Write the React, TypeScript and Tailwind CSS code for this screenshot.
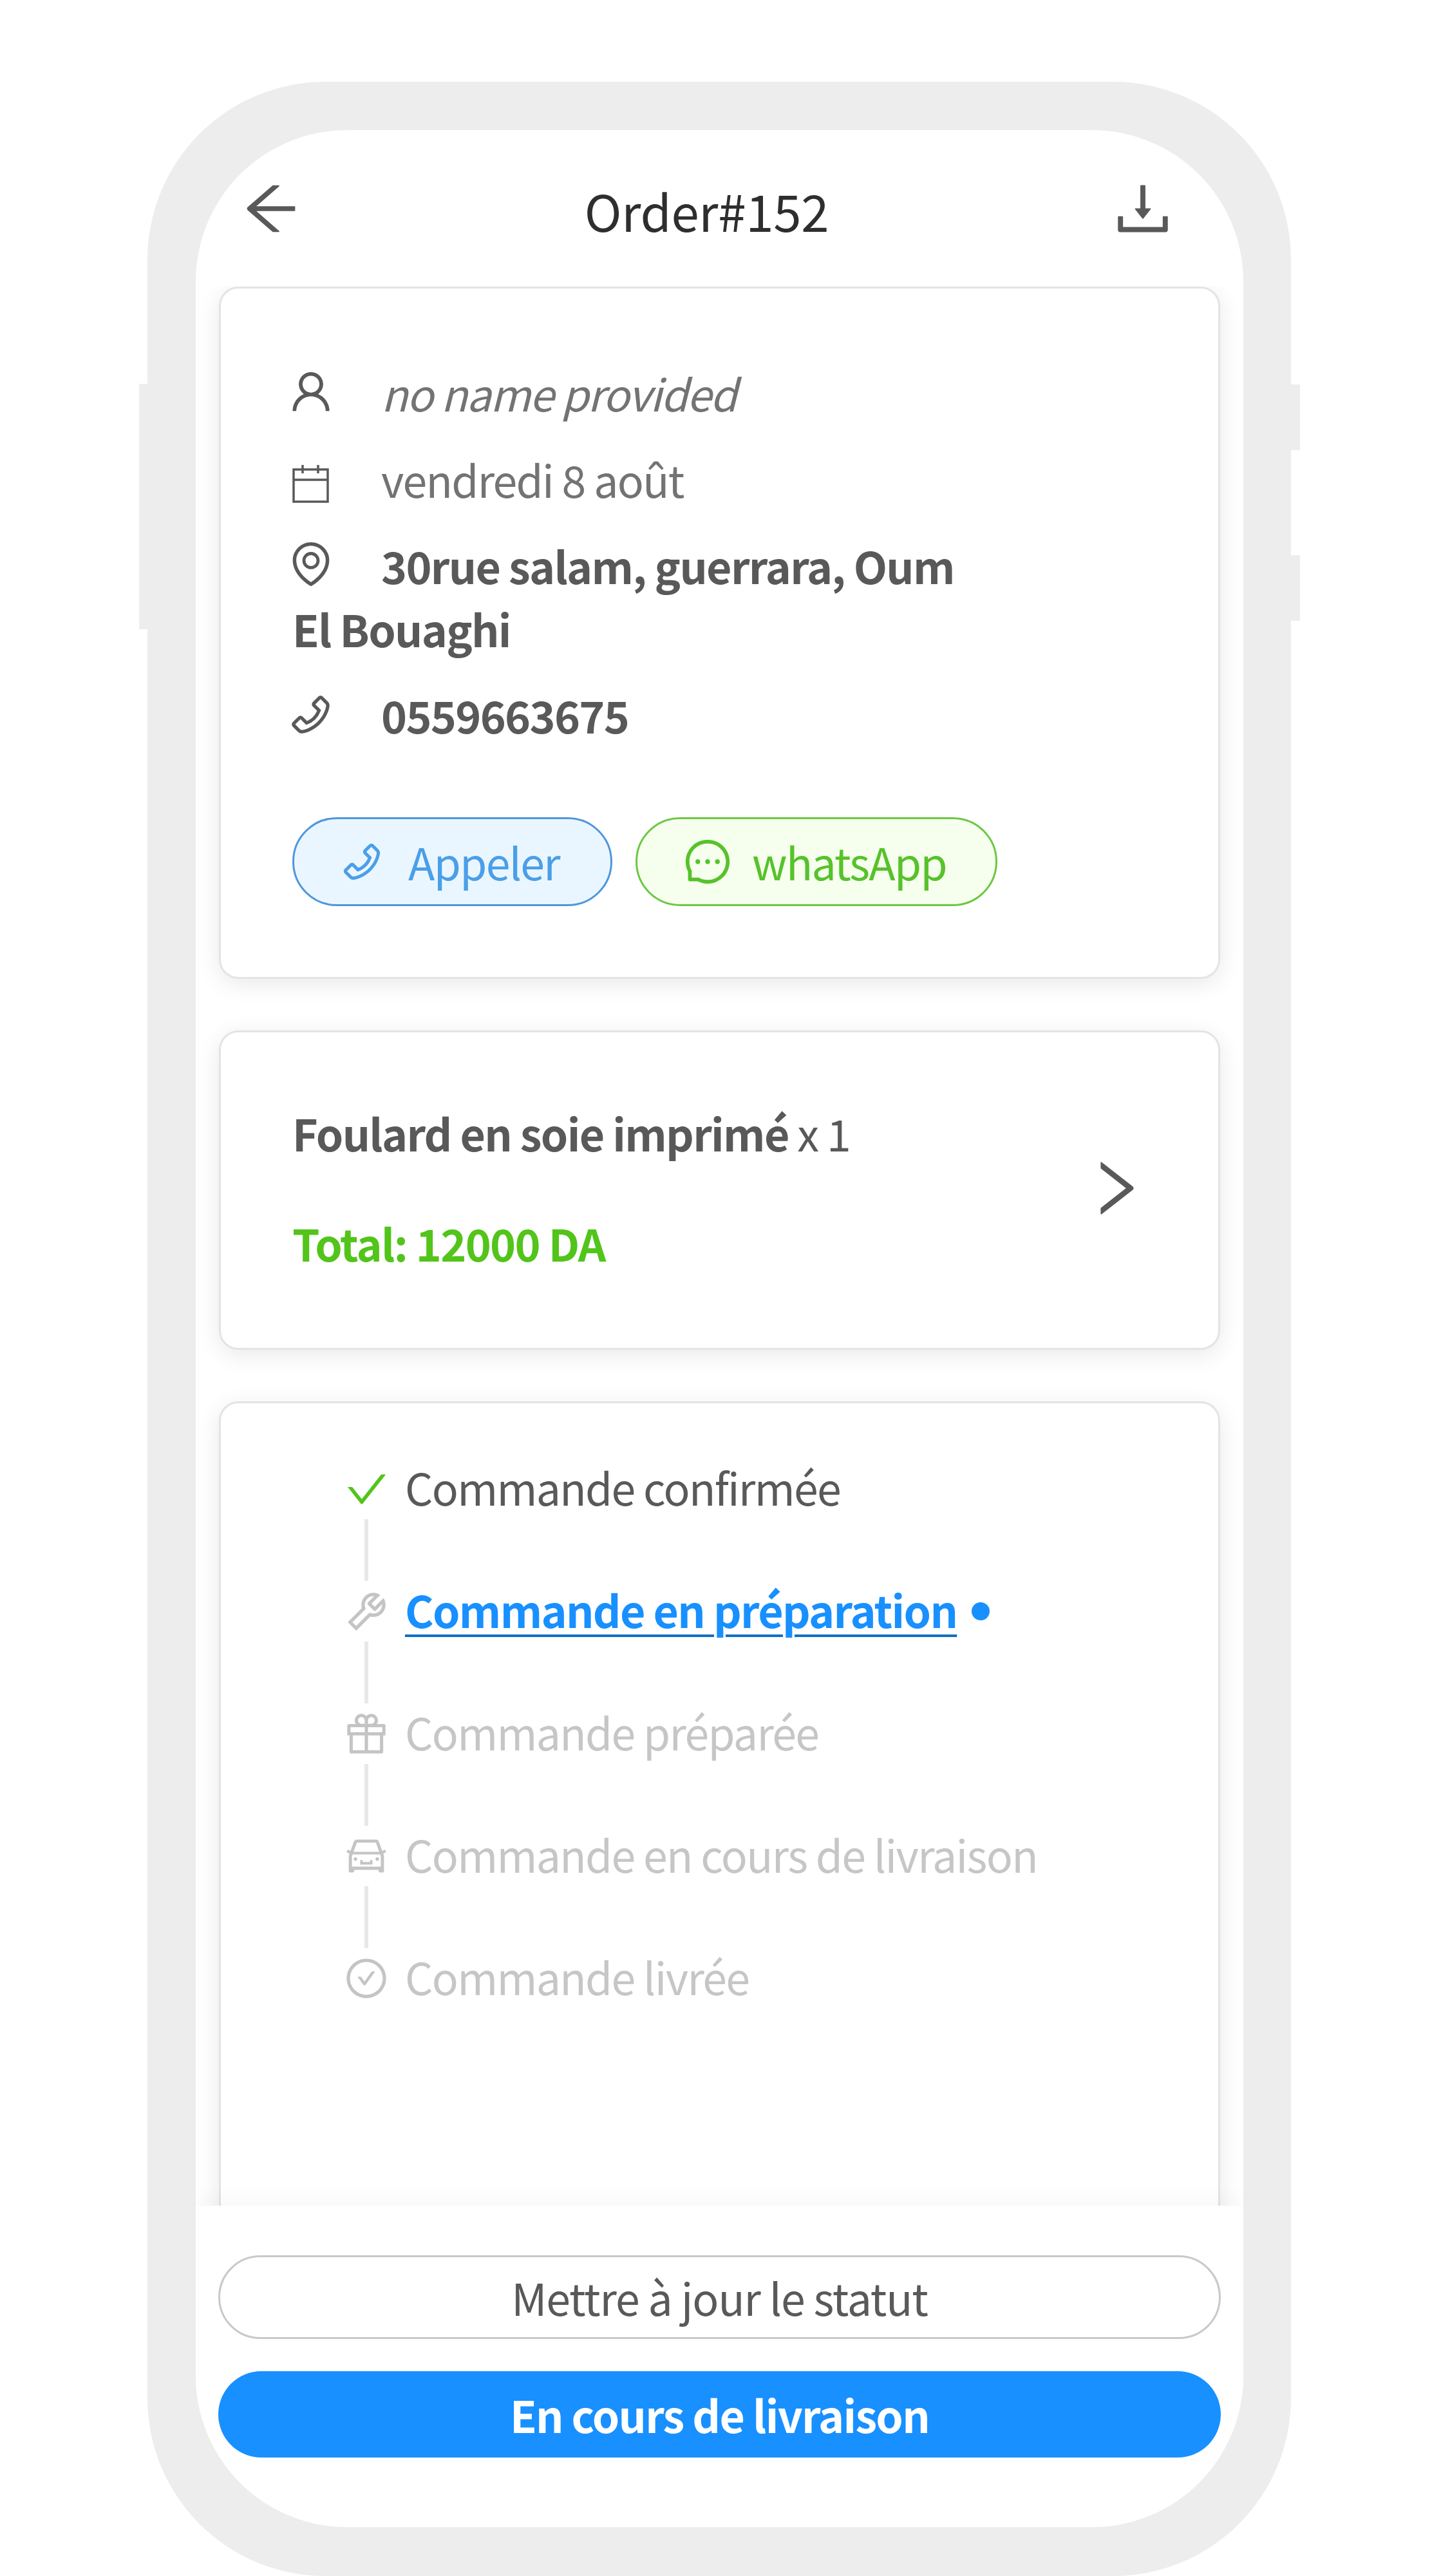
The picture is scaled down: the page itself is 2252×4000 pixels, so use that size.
import type { ReactNode } from "react"
import {
  AiOutlineArrowLeft,
  AiOutlineCar,
  AiOutlineCheck,
  AiOutlineCheckCircle,
  AiOutlineDownload,
  AiOutlineEnvironment,
  AiOutlineGift,
  AiOutlineMessage,
  AiOutlinePhone,
  AiOutlineRight,
  AiOutlineTool,
  AiOutlineUser,
} from "react-icons/ai"

function CalendarIcon() {
  return (
    <svg viewBox="0 0 57 60" className="mb-[20px] h-[60px] w-[57px] shrink-0" fill="none" stroke="currentColor" strokeWidth="3.5">
      <rect x="2" y="8" width="53" height="50" />
      <path d="M2 24H55M16 1V14M40 1V14" />
    </svg>
  )
}

function InfoIcon({ children }: { children: ReactNode }) {
  return (
    <span className="mr-[81px] inline-flex h-[60px] w-[57px] items-center justify-center align-[-8px] text-[#595959]">
      {children}
    </span>
  )
}

const steps = [
  { label: "Commande confirmée", icon: <AiOutlineCheck size={73} className="shrink-0 text-[#52c41a]" />, state: "done" },
  { label: "Commande en préparation", icon: <AiOutlineTool size={75} className="shrink-0 text-[#c4c4c4]" />, state: "active" },
  { label: "Commande préparée", icon: <AiOutlineGift size={76} className="shrink-0 text-[#c4c4c4]" />, state: "todo" },
  { label: "Commande en cours de livraison", icon: <AiOutlineCar size={70} className="shrink-0 text-[#c4c4c4]" />, state: "todo" },
  { label: "Commande livrée", icon: <AiOutlineCheckCircle size={70} className="shrink-0 text-[#c4c4c4]" />, state: "todo" },
]

export default function App() {
  return (
    <div className="h-[4000px] w-[2252px] overflow-hidden bg-white pl-[229px] pt-[127px] font-['Noto_Sans_CJK_SC','Noto_Sans',sans-serif] text-[68px] leading-[98px] tracking-[-1.7px] text-[#595959]">
      <div className="relative h-[3873px] w-[1776px] rounded-[276px] bg-[#ededed] p-[75px]">
        {/* side buttons */}
        <div className="absolute left-[-13px] top-[469px] h-[381px] w-[13px] bg-[#ededed]" />
        <div className="absolute right-[-14px] top-[470px] h-[102px] w-[14px] bg-[#ededed]" />
        <div className="absolute right-[-14px] top-[735px] h-[102px] w-[14px] bg-[#ededed]" />

        <div className="flex h-[3722px] w-[1627px] flex-col overflow-hidden rounded-[235px] bg-white">
          {/* Header */}
          <div className="flex h-[243px] shrink-0 items-center justify-between pl-[65px] pr-[103px] text-[#595959]">
            <AiOutlineArrowLeft size={104} />
            <h1 className="pt-[4px] text-[78px] font-normal tracking-[-0.3px] text-[#2e2e2e]">Order#152</h1>
            <AiOutlineDownload size={106} />
          </div>

          {/* Content */}
          <div className="flex min-h-0 flex-1 flex-col gap-[80px] overflow-hidden px-[36px]">
            <div className="shrink-0 rounded-[30px] border-[3px] border-[#e4e4e4] bg-white pb-[110px] pl-[111px] pr-[114px] pt-[113px] shadow-[0_8px_36px_rgba(0,0,0,0.09)]">
              <div className="flex flex-col gap-[36px]">
                <div className="w-[1080px]">
                  <InfoIcon><AiOutlineUser size={78} className="shrink-0" /></InfoIcon>
                  <em className="text-[#737373]">no name provided</em>
                </div>
                <div className="w-[1080px]">
                  <InfoIcon><CalendarIcon /></InfoIcon>
                  <span className="text-[#737373]">vendredi 8 août</span>
                </div>
                <div className="w-[1080px] font-bold">
                  <InfoIcon><AiOutlineEnvironment size={78} className="shrink-0" /></InfoIcon>
                  30rue salam, guerrara, Oum El Bouaghi
                </div>
                <div className="w-[1080px] font-bold">
                  <InfoIcon><AiOutlinePhone size={75} className="shrink-0" /></InfoIcon>
                  0559663675
                </div>
              </div>
              <div className="mt-[110px] flex gap-[36px]">
                <div className="flex h-[138px] w-[497px] items-center justify-center gap-[36px] rounded-full border-[3px] border-[#4f96dc] bg-[#eaf6ff] pr-[10px] text-[#4a9fe8]">
                  <AiOutlinePhone size={72} />
                  <span>Appeler</span>
                </div>
                <div className="flex h-[138px] w-[562px] items-center justify-center gap-[30px] rounded-full border-[3px] border-[#6cc743] bg-[#f6ffed] pr-[6px] text-[#57c22b]">
                  <AiOutlineMessage size={78} />
                  <span>whatsApp</span>
                </div>
              </div>
            </div>

            <div className="flex h-[496px] shrink-0 items-center justify-between rounded-[30px] border-[3px] border-[#e4e4e4] bg-white pb-[6px] pl-[111px] pr-[105px] shadow-[0_8px_36px_rgba(0,0,0,0.09)]">
              <div className="flex flex-col gap-[73px] pb-[1px]">
                <div>
                  <span className="font-bold">Foulard en soie imprimé</span> x 1
                </div>
                <div className="font-bold text-[#52c41a]">Total: 12000 DA</div>
              </div>
              <AiOutlineRight size={110} />
            </div>

            <div className="h-[1400px] shrink-0 rounded-[30px] border-[3px] border-[#e4e4e4] bg-white pl-[194px] pt-[86px] shadow-[0_8px_36px_rgba(0,0,0,0.09)]">
              {steps.map((step, i) => (
                <div key={step.label} className="flex flex-col">
                  <div className="flex h-[94px] items-center gap-[28px]">
                    <span className="flex h-[64px] w-[64px] items-center justify-center">{step.icon}</span>
                    {step.state === "active" ? (
                      <>
                        <span className="pb-[6px] font-bold text-[#1890ff] underline decoration-[#0f6fc6] decoration-[4px] underline-offset-[10px]">
                          {step.label}
                        </span>
                        <span className="ml-[-5px] h-[28px] w-[28px] rounded-full bg-[#1890ff]" />
                      </>
                    ) : (
                      <span className={step.state === "done" ? "pb-[6px] text-[#595959]" : "pb-[6px] text-[#c6c6c6]"}>{step.label}</span>
                    )}
                  </div>
                  {i < steps.length - 1 && <div className="ml-[29px] h-[96px] w-[6px] bg-[#e8e8e8]" />}
                </div>
              ))}
            </div>
          </div>

          {/* Bottom actions */}
          <div className="z-10 flex h-[499px] shrink-0 flex-col gap-[50px] bg-white px-[35px] pt-[77px] shadow-[0_-12px_30px_rgba(0,0,0,0.03)]">
            <div className="flex h-[130px] items-center justify-center rounded-full border-[3px] border-[#c9c9c9] bg-white tracking-[-1.15px]">
              Mettre à jour le statut
            </div>
            <div className="flex h-[134px] items-center justify-center rounded-full bg-[#1890ff] font-bold text-white">
              En cours de livraison
            </div>
          </div>
        </div>
      </div>
    </div>
  )
}
